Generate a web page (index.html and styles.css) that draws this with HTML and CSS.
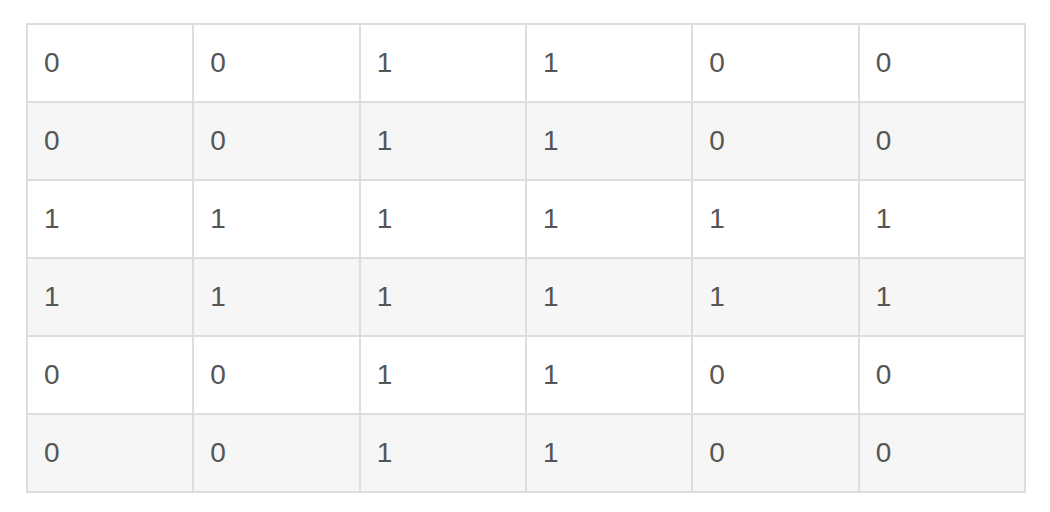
FILE: index.html
```html
<!DOCTYPE html>
<html>
<head>
<meta charset="utf-8">
<link rel="stylesheet" href="styles.css">
</head>
<body>
<table class="grid">
<tbody>
<tr><td>0</td><td>0</td><td>1</td><td>1</td><td>0</td><td>0</td></tr>
<tr><td>0</td><td>0</td><td>1</td><td>1</td><td>0</td><td>0</td></tr>
<tr><td>1</td><td>1</td><td>1</td><td>1</td><td>1</td><td>1</td></tr>
<tr><td>1</td><td>1</td><td>1</td><td>1</td><td>1</td><td>1</td></tr>
<tr><td>0</td><td>0</td><td>1</td><td>1</td><td>0</td><td>0</td></tr>
<tr><td>0</td><td>0</td><td>1</td><td>1</td><td>0</td><td>0</td></tr>
</tbody>
</table>
</body>
</html>
```

FILE: styles.css
```css
html, body {
  margin: 0;
  padding: 0;
  background: #fff;
}
body {
  padding: 23px 24px 0 26px;
  font-family: "Liberation Sans", Arial, sans-serif;
  font-size: 28px;
  color: #555;
}
.grid {
  border-collapse: collapse;
  width: 1000px;
  table-layout: fixed;
}
.grid td {
  border: 2px solid #ddd;
  height: 78px;
  padding: 0 16px;
  box-sizing: border-box;
  vertical-align: middle;
  line-height: 40px;
}
.grid tr:nth-child(even) td {
  background: #f6f6f6;
}
```
